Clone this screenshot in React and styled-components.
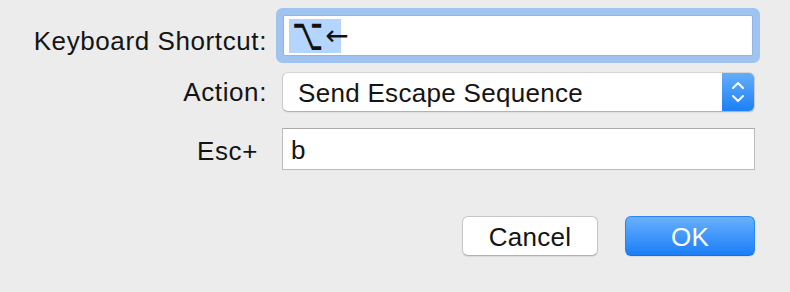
import React from 'react';
import styled, { createGlobalStyle } from 'styled-components';

const GlobalStyle = createGlobalStyle`
  html, body {
    margin: 0;
    padding: 0;
    background: #ececec;
  }
  body {
    font-family: "Liberation Sans", Arial, sans-serif;
    color: #141414;
  }
`;

const FIELDS = [
  { label: 'Keyboard Shortcut:', kind: 'shortcut', value: ['⌥', '←'] },
  { label: 'Action:', kind: 'popup', value: 'Send Escape Sequence' },
  { label: 'Esc+', kind: 'text', value: 'b' },
];

export default function App() {
  return (
    <>
      <GlobalStyle />
      <Dialog>
        <Form>
          {FIELDS.map(field => (
            <React.Fragment key={field.label}>
              <Label $kind={field.kind}>{field.label}</Label>
              {field.kind === 'shortcut' && (
                <FocusField>
                  <Selection>
                    <OptionGlyph>{field.value[0]}</OptionGlyph>
                    <ArrowGlyph>{field.value[1]}</ArrowGlyph>
                  </Selection>
                </FocusField>
              )}
              {field.kind === 'popup' && (
                <Popup>
                  <PopupText>{field.value}</PopupText>
                  <Stepper>
                    <svg width="14" height="24" viewBox="0 0 14 24" fill="none">
                      <path
                        d="M2 8 L7 3 L12 8"
                        stroke="#fff"
                        strokeWidth="2"
                        strokeLinecap="round"
                        strokeLinejoin="round"
                      />
                      <path
                        d="M2 16 L7 21 L12 16"
                        stroke="#fff"
                        strokeWidth="2"
                        strokeLinecap="round"
                        strokeLinejoin="round"
                      />
                    </svg>
                  </Stepper>
                </Popup>
              )}
              {field.kind === 'text' && <TextField>{field.value}</TextField>}
            </React.Fragment>
          ))}
        </Form>
        <Buttons>
          <Button>Cancel</Button>
          <Button $primary>OK</Button>
        </Buttons>
      </Dialog>
    </>
  );
}

const Dialog = styled.div`
  width: 790px;
  height: 292px;
  box-sizing: border-box;
  padding-top: 15px;
  display: flex;
  flex-direction: column;
`;

const Form = styled.div`
  display: grid;
  grid-template-columns: 267px 473px;
  grid-template-rows: 41px 40px 42px;
  column-gap: 15px;
  row-gap: 16px;
  align-items: center;
`;

const Label = styled.div`
  font-size: 26px;
  letter-spacing: 0.6px;
  text-align: right;
  white-space: nowrap;
  padding-top: ${p => (p.$kind === 'shortcut' ? '11px' : p.$kind === 'text' ? '4px' : '0')};
  padding-right: ${p => (p.$kind === 'text' ? '9px' : '0')};
`;

const FocusField = styled.div`
  box-sizing: border-box;
  height: 41px;
  width: 470px;
  margin-left: 1px;
  background: #fff;
  border: 1px solid #8fb6e6;
  border-radius: 2px;
  box-shadow: 0 0 0 7px #9ec4ef;
  display: flex;
  align-items: center;
  padding-left: 5px;
`;

const Selection = styled.span`
  background: #b4d5fe;
  height: 34px;
  width: 52px;
  box-sizing: border-box;
  padding: 0 1px 0 3px;
  display: flex;
  align-items: center;
  gap: 2px;
  font-family: "DejaVu Sans", "Liberation Sans", sans-serif;
  color: #111;
`;

const OptionGlyph = styled.span`
  display: inline-block;
  font-size: 27px;
  transform: scaleY(1.7);
  transform-origin: center 58%;
`;

const ArrowGlyph = styled.span`
  font-size: 28px;
`;

const Popup = styled.div`
  box-sizing: border-box;
  height: 40px;
  display: flex;
  align-items: stretch;
  background: #fff;
  border: 1px solid #c9c9c9;
  border-top-color: #d4d4d4;
  border-bottom-color: #b3b3b3;
  border-radius: 6px;
  box-shadow: 0 1px 1px rgba(0, 0, 0, 0.06);
  overflow: hidden;
`;

const PopupText = styled.div`
  flex: 1;
  display: flex;
  align-items: center;
  padding-left: 15px;
  padding-top: 3px;
  font-size: 26px;
  letter-spacing: 0.3px;
`;

const Stepper = styled.div`
  width: 32px;
  display: flex;
  align-items: center;
  justify-content: center;
  background: linear-gradient(#64adfb, #1c80f8);
`;

const TextField = styled.div`
  box-sizing: border-box;
  height: 42px;
  background: #fff;
  border: 1px solid #bcbcbc;
  border-top-color: #aaaaaa;
  display: flex;
  align-items: center;
  padding-left: 8px;
  padding-top: 3px;
  font-size: 26px;
`;

const Buttons = styled.div`
  display: flex;
  justify-content: flex-end;
  gap: 27px;
  margin-top: 46px;
  padding-right: 35px;
`;

const Button = styled.button`
  box-sizing: border-box;
  height: 40px;
  width: ${p => (p.$primary ? '130px' : '136px')};
  border-radius: 6px;
  font-family: "Liberation Sans", Arial, sans-serif;
  font-size: 26px;
  letter-spacing: 0.3px;
  padding: 2px 0 0;
  cursor: pointer;
  color: ${p => (p.$primary ? '#fff' : '#141414')};
  background: ${p => (p.$primary ? 'linear-gradient(#68b0fc, #1a7ef8)' : '#fff')};
  border: 1px solid ${p => (p.$primary ? '#2a86f5' : '#c6c6c6')};
  border-bottom-color: ${p => (p.$primary ? '#1670e0' : '#b0b0b0')};
  box-shadow: 0 1px 1px rgba(0, 0, 0, 0.08);
`;
